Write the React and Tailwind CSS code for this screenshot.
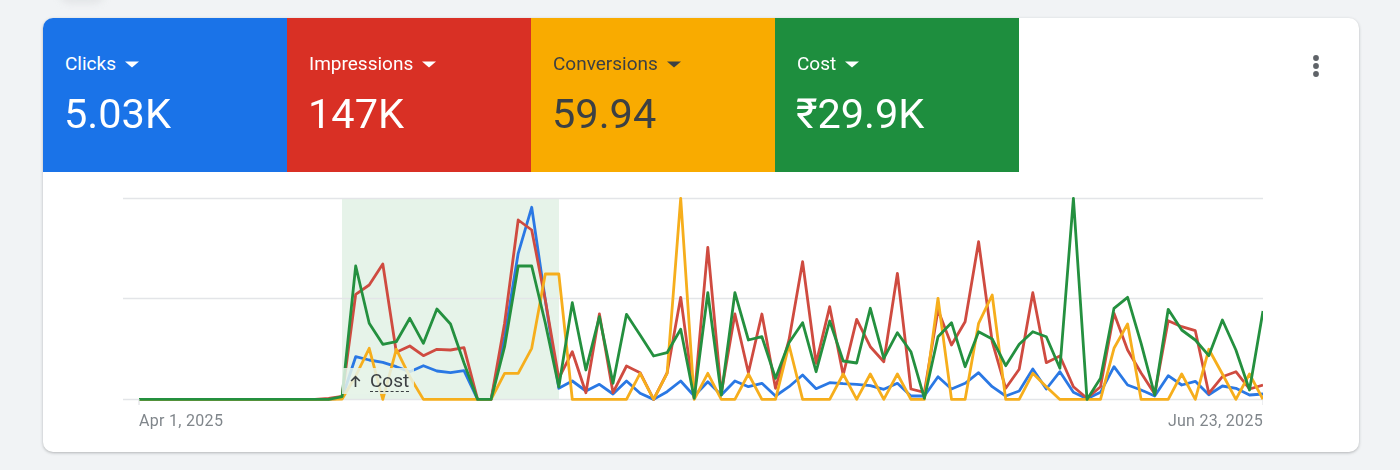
const flat = (n) => Array(n).fill(399.4);
const B = 399.4;
const blue = [...flat(15), 398, 356.7, 360, 362.3, 366.7, 371.7, 365.7, 371, 372.7, 370.7, B, B, 336.7, 253.3, 207.3, 300, 388.3, 381, 391, 384.3, 394, 381, 393.3, B, 391.7, 381, 396, 381.7, 395, 381, 386.7, 383.3, 396, 386.7, 375, 388.7, 382.7, 383.7, 384.3, 385.7, 389.3, 383.3, 396, 396, 376.7, 389, 383.3, 372.7, 386.7, 396, 391, 369, 389, 371.7, 392.3, 398.7, 392.3, 366.7, 385, 390, 396, 375.7, 385, 381.3, 394.7, 386, 388.3, 395, 394];
const red = [...flat(14), 398.5, 396.5, 294.3, 285, 264, 352.3, 346, 355.7, 349.3, 350, 347.7, B, B, 323.3, 220, 230, 300, 378.3, 351.7, 392.7, 314, 392.7, 366, 372.7, B, 373, 297.3, 398.3, 247.3, 393, 314, 372.7, 314, 388.3, 340, 261.7, 363.3, 306.7, 375, 319.3, 346.7, 361.7, 273.3, 389, 392.3, 310, 345, 321.7, 241.7, 341.7, 388.3, 369.3, 292.7, 362.7, 356, 386.7, 398.3, 386.7, 313.3, 350, 373, 394, 320.7, 326.7, 330.7, 393.3, 376.7, 371.7, 389, 385];
const yellow = [...flat(15), 399, 376, 348.3, B, 349.3, 376.7, B, B, B, B, B, B, 373.3, 373.3, 348.3, 274, 274, B, B, B, B, B, 373.3, B, 373.3, 198.3, B, 373.3, B, B, 374, B, B, 345, B, B, B, 374, B, 374, B, 374, B, B, 298.3, B, B, 323.3, 295, B, B, 373.3, 386.7, B, B, B, B, 348.3, 324, B, B, B, 374, B, 349.3, 374, B, 374, B];
const green = [...flat(15), 396.7, 266, 323.3, 344.3, 341.7, 318.3, 343.3, 309, 324, 363, B, B, 346.7, 266, 266, 323, 387, 302.7, 370, 316.7, 383.3, 314.3, 335, 356, 352.7, 329.3, 398.3, 292.7, 395, 292.7, 340, 336.7, 378.3, 342.7, 322.7, 371.7, 321, 361, 363, 308.3, 358.3, 332.7, 351.7, 398.3, 336.7, 322.7, 366.7, 331.7, 339, 365.7, 344.3, 331.7, 336.7, 368.3, 198.3, B, 378.3, 308.3, 297.3, 343.3, 395, 309.3, 330, 340, 355.7, 320, 350, 390, 311];

// Chart svg starts at page x=123, y=190
const pts = (a) => a.map((y, i) => `${(139 + (1124 / 83) * i - 123).toFixed(1)},${(y - 190).toFixed(1)}`).join(" ");

function Caret() {
  return (
    <svg width="14" height="7" viewBox="0 0 14 7" className="ml-[9px]" fill="currentColor">
      <path d="M0 0.5h14L7 6.5z" />
    </svg>
  );
}

function Tile({ label, value, bg, fg }) {
  return (
    <div className={`w-[244px] h-[154px] pl-[22px] pt-[33px] ${bg} ${fg}`}>
      <div className="flex items-center h-[26px] text-[19px] leading-[26px]">
        {label}
        <Caret />
      </div>
      <div className="mt-[11px] ml-[-1px] text-[41.5px] leading-[52px]">{value}</div>
    </div>
  );
}

export default function App() {
  return (
    <div className="relative w-[1400px] h-[470px] overflow-hidden bg-[#f1f3f5] pt-[18px] pl-[43px] font-['Roboto',sans-serif]">
      <div className="absolute left-[58px] top-[-22px] w-[48px] h-[26px] rounded-full bg-[#e4e6e8] blur-[3px]" />
      <div className="relative w-[1316px] h-[434px] rounded-[10px] bg-white overflow-hidden shadow-[0_1px_3px_rgba(60,64,67,0.35)] blur-[0.4px]">
        <div className="flex">
          <Tile label="Clicks" value="5.03K" bg="bg-[#1a73e8]" fg="text-white" />
          <Tile label="Impressions" value="147K" bg="bg-[#d93025]" fg="text-white" />
          <Tile label="Conversions" value="59.94" bg="bg-[#f9ab00]" fg="text-[#3c4043]" />
          <Tile label="Cost" value="₹29.9K" bg="bg-[#1e8e3e]" fg="text-white" />
          <div className="ml-auto mr-[31px] mt-[36px] w-6 h-6">
            <svg width="24" height="24" viewBox="0 0 24 24" fill="#5f6368">
              <circle cx="12" cy="4" r="2.9" />
              <circle cx="12" cy="12" r="2.9" />
              <circle cx="12" cy="20" r="2.9" />
            </svg>
          </div>
        </div>

        <div className="relative ml-[80px] mt-[18px] w-[1140px] h-[215px]">
          <svg width="1140" height="215" viewBox="0 0 1140 215" className="block">
            <rect x="219" y="8" width="217" height="201.5" fill="#e6f3e9" />
            <g stroke="#e3e5e8" strokeWidth="1.6">
              <line x1="0" x2="1140" y1="8.5" y2="8.5" />
              <line x1="0" x2="1140" y1="108.5" y2="108.5" />
              <line x1="0" x2="1140" y1="209.5" y2="209.5" />
            </g>
            <g fill="none" strokeWidth="2.8" strokeLinejoin="round" strokeLinecap="butt">
              <polyline points={pts(blue)} stroke="#2a78e4" />
              <polyline points={pts(red)} stroke="#cf4b40" />
              <polyline points={pts(yellow)} stroke="#f6ae1c" />
              <polyline points={pts(green)} stroke="#24903f" />
            </g>
            <line x1="16" x2="16" y1="209" y2="216" stroke="#dadce0" />
            <line x1="1140" x2="1140" y1="209" y2="216" stroke="#dadce0" />
          </svg>
          <div className="absolute left-[219px] top-[178px] w-[72px] h-[26px] flex items-center pl-[7px] bg-[#e6f3e9]/85 text-[#3c4043]">
            <svg width="13" height="13" viewBox="0 0 12 12" fill="none" stroke="#3c4043" strokeWidth="1.5">
              <path d="M6 11V2M2 5.5L6 1.5l4 4" />
            </svg>
            <span className="ml-[8px] text-[19px] leading-[20px] border-b border-dashed border-[#3c4043]">Cost</span>
          </div>
        </div>

        <div className="flex justify-between ml-[96px] mr-[96px] mt-[6px] text-[16px] leading-[20px] tracking-[0.3px] text-[#80868b]">
          <span>Apr 1, 2025</span>
          <span>Jun 23, 2025</span>
        </div>
      </div>
    </div>
  );
}
